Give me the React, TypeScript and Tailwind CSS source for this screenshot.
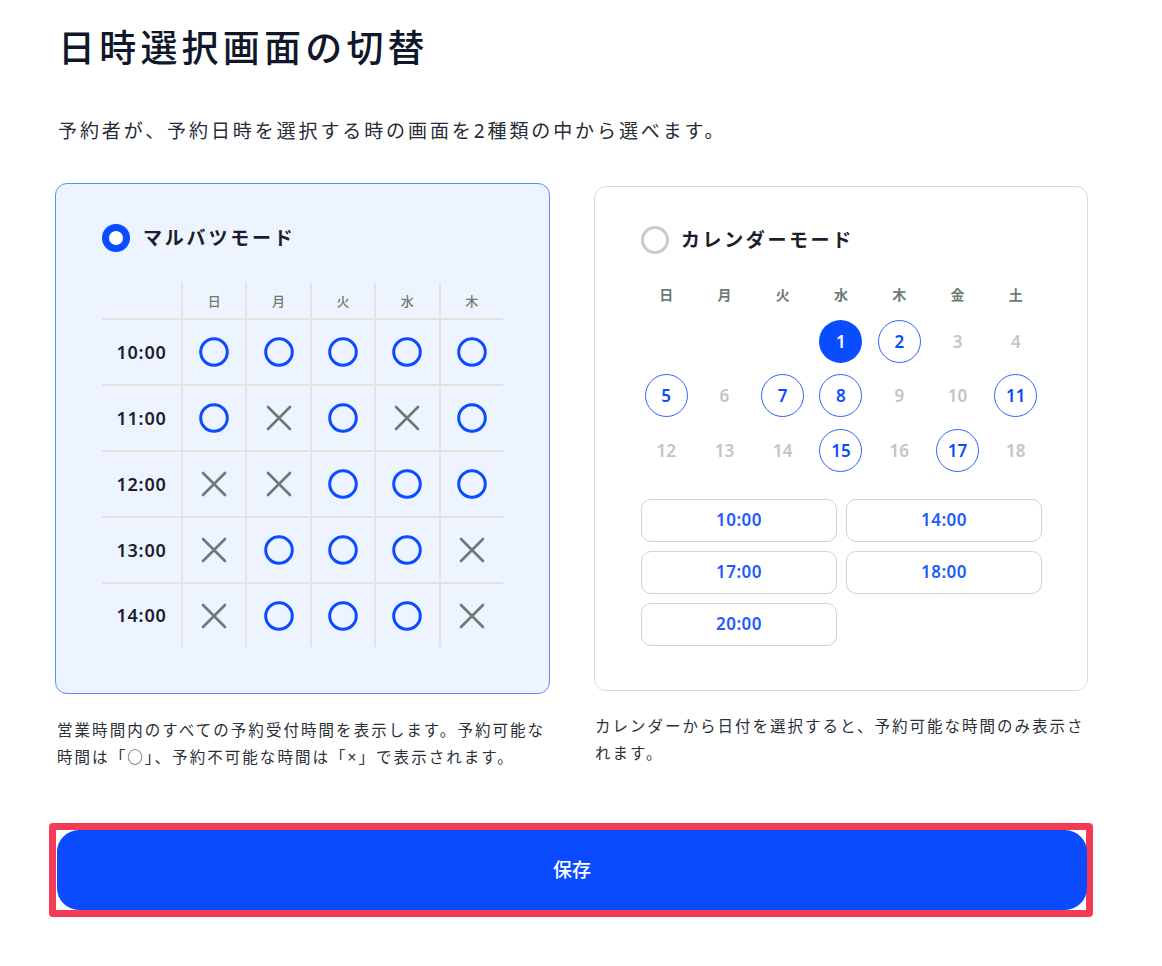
import React from 'react';

type Mark = 'o' | 'x';

const days5 = ['日', '月', '火', '水', '木'];
const days7 = ['日', '月', '火', '水', '木', '金', '土'];

const marks: { time: string; row: Mark[] }[] = [
  { time: '10:00', row: ['o', 'o', 'o', 'o', 'o'] },
  { time: '11:00', row: ['o', 'x', 'o', 'x', 'o'] },
  { time: '12:00', row: ['x', 'x', 'o', 'o', 'o'] },
  { time: '13:00', row: ['x', 'o', 'o', 'o', 'x'] },
  { time: '14:00', row: ['x', 'o', 'o', 'o', 'x'] },
];

// null = empty cell, 's' = selected, 'a' = available, 'n' = not available
const calendar: { d: number | null; s: 's' | 'a' | 'n' }[][] = [
  [
    { d: null, s: 'n' },
    { d: null, s: 'n' },
    { d: null, s: 'n' },
    { d: 1, s: 's' },
    { d: 2, s: 'a' },
    { d: 3, s: 'n' },
    { d: 4, s: 'n' },
  ],
  [
    { d: 5, s: 'a' },
    { d: 6, s: 'n' },
    { d: 7, s: 'a' },
    { d: 8, s: 'a' },
    { d: 9, s: 'n' },
    { d: 10, s: 'n' },
    { d: 11, s: 'a' },
  ],
  [
    { d: 12, s: 'n' },
    { d: 13, s: 'n' },
    { d: 14, s: 'n' },
    { d: 15, s: 'a' },
    { d: 16, s: 'n' },
    { d: 17, s: 'a' },
    { d: 18, s: 'n' },
  ],
];

const times = ['10:00', '14:00', '17:00', '18:00', '20:00'];

function MarkIcon({ mark }: { mark: Mark }) {
  if (mark === 'o') {
    return (
      <svg width="30" height="30" viewBox="0 0 30 30">
        <circle cx="15" cy="15" r="13.3" fill="none" stroke="#0a4cff" strokeWidth="3" />
      </svg>
    );
  }
  return (
    <svg width="26" height="26" viewBox="0 0 26 26">
      <path d="M2 2L24 24M24 2L2 24" stroke="#6c7a73" strokeWidth="2.6" strokeLinecap="round" />
    </svg>
  );
}

function MaruBatsuCard() {
  return (
    <div className="h-[511px] rounded-[12px] border border-[#5b8cff] bg-[#eef4ff] pl-[46px] pt-[40px]">
      <div className="flex h-[28px] items-center gap-[13px]">
        <div className="h-[28px] w-[28px] rounded-full border-[7px] border-[#0a4cff] bg-white" />
        <span className="text-[19px] font-semibold tracking-[2.8px] text-[#1a1f2b]">マルバツモード</span>
      </div>
      <div className="mt-[31px] grid w-[401px] grid-cols-[79px_repeat(5,64.4px)]">
        <div className="h-[35px]" />
        {days5.map((d) => (
          <div
            key={d}
            className="flex h-[35px] items-center justify-center border-l-2 border-[#e3e4df] pt-[2px] text-[13px] font-medium text-[#6e7a74]"
          >
            {d}
          </div>
        ))}
        {marks.map((r, i) => (
          <React.Fragment key={r.time}>
            <div
              className={`flex items-center justify-center border-t-2 border-[#e3e4df] text-[18px] font-semibold tracking-[0.8px] text-[#1a1f2b] ${
                i === marks.length - 1 ? 'h-[65px]' : 'h-[66px]'
              }`}
            >
              {r.time}
            </div>
            {r.row.map((m, j) => (
              <div
                key={j}
                className={`flex items-center justify-center border-l-2 border-t-2 border-[#e3e4df] ${
                  i === marks.length - 1 ? 'h-[65px]' : 'h-[66px]'
                }`}
              >
                <MarkIcon mark={m} />
              </div>
            ))}
          </React.Fragment>
        ))}
      </div>
    </div>
  );
}

function CalendarCard() {
  return (
    <div className="mt-[3px] h-[505px] rounded-[12px] border border-[#d9dbd7] bg-white pl-[46px] pt-[39px]">
      <div className="flex h-[28px] items-center gap-[12px]">
        <div className="h-[28px] w-[28px] rounded-full border-[3px] border-[#c8ccc7] bg-white" />
        <span className="text-[19px] font-semibold tracking-[2.6px] text-[#1a1f2b]">カレンダーモード</span>
      </div>
      <div className="-ml-[4px] mt-[20px] grid w-[408px] grid-cols-7">
        {days7.map((d) => (
          <div key={d} className="flex h-[40px] items-center justify-center text-[14px] font-semibold text-[#6e7a74]">
            {d}
          </div>
        ))}
        {calendar.flat().map((c, i) => (
          <div key={i} className="flex h-[54.5px] items-center justify-center">
            {c.d !== null && (
              <div
                className={`flex h-[43px] w-[43px] items-center justify-center rounded-full text-[17px] font-semibold ${
                  c.s === 's'
                    ? 'bg-[#0a4cff] text-white'
                    : c.s === 'a'
                      ? 'border-[1.5px] border-[#2a62ff] text-[#0a4cff]'
                      : 'text-[#c2c6c2]'
                }`}
              >
                {c.d}
              </div>
            )}
          </div>
        ))}
      </div>
      <div className="mt-[21px] grid w-[401px] grid-cols-2 gap-[9px]">
        {times.map((t) => (
          <div
            key={t}
            className="flex h-[43px] items-center justify-center rounded-[10px] border-[1.5px] border-[#d0d3ce] text-[17px] font-semibold tracking-[0.5px] text-[#1f5cff]"
          >
            {t}
          </div>
        ))}
      </div>
    </div>
  );
}

export default function App() {
  return (
    <div
      className="min-h-[966px] bg-white px-[55px] pt-[24px] text-[#1f2430]"
      style={{ fontFamily: '"Noto Sans", "Noto Sans CJK JP", sans-serif' }}
    >
      <h1 className="pl-[3px] text-[37px] font-medium leading-[48px] tracking-[4.2px] text-[#10172a]">
        日時選択画面の切替
      </h1>
      <p className="mt-[45px] pl-[3px] text-[19px] leading-[28px] tracking-[2.9px] text-[#262b36]">
        予約者が、予約日時を選択する時の画面を2種類の中から選べます。
      </p>
      <div className="mt-[38px] grid w-[1033px] grid-cols-[495px_494px] gap-x-[44px]">
        <div className="flex flex-col">
          <MaruBatsuCard />
          <p className="mt-[23px] whitespace-nowrap pl-[2px] text-[15.5px] leading-[27px] tracking-[2.05px] text-[#2a2f38]">
            <span className="block">営業時間内のすべての予約受付時間を表示します。予約可能な</span>
            <span className="block">時間は「○」、予約不可能な時間は「×」で表示されます。</span>
          </p>
        </div>
        <div className="flex flex-col">
          <CalendarCard />
          <p className="mt-[22px] whitespace-nowrap pl-[1px] text-[15.5px] leading-[27px] tracking-[2px] text-[#2a2f38]">
            <span className="block">カレンダーから日付を選択すると、予約可能な時間のみ表示さ</span>
            <span className="block">れます。</span>
          </p>
        </div>
      </div>
      <div className="-ml-[6px] mt-[52px] w-[1044px] rounded-[4px] border-[7px] border-[#f43b55]">
        <button className="ml-[1px] flex h-[80px] w-[1030px] items-center justify-center rounded-[22px] bg-[#0a4bff] text-[19px] font-medium text-white">
          保存
        </button>
      </div>
    </div>
  );
}
